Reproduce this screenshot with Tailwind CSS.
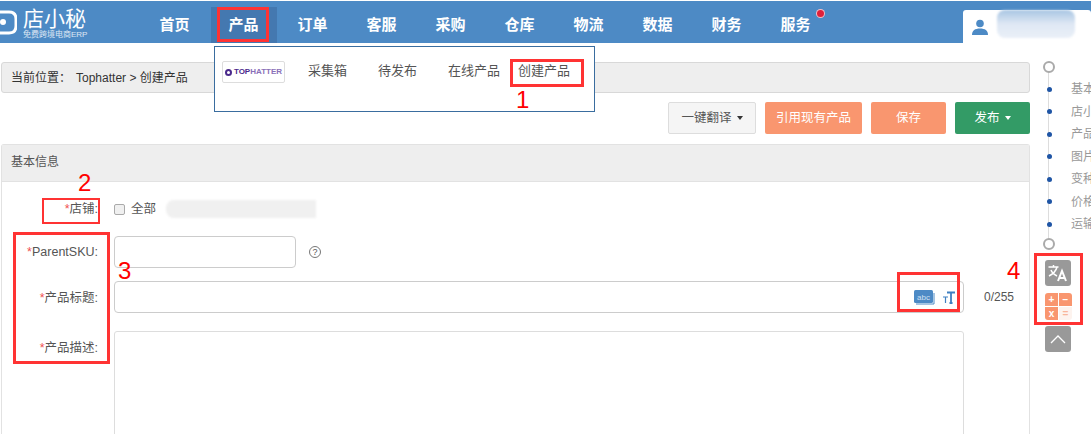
<!DOCTYPE html>
<html lang="zh-CN">
<head>
  <meta charset="UTF-8">
  <title>创建产品</title>
  <script src="https://cdn.jsdelivr.net/npm/@tailwindcss/browser@4"></script>
</head>
<body class="relative w-[1091px] h-[434px] overflow-hidden bg-white text-[#555] text-[12px] font-['Liberation_Sans','Noto_Sans_CJK_SC',sans-serif]">
  <!-- Header -->
  <header class="mt-px h-[42px] bg-[#4d8ac5] flex text-white">
    <div class="w-[140px] h-full flex items-center shrink-0">
      <svg class="w-[17px] h-[28px] shrink-0" viewBox="0 0 17 28" fill="none"><path d="M0 4h9q7 0 7 7v7q0 7-7 7H0" stroke="#fff" stroke-width="3"/><circle cx="3" cy="14" r="3" fill="#fff"/></svg>
      <div class="ml-[6px] mt-[1px]">
        <div class="text-[21px] leading-[23px]">店小秘</div>
        <div class="text-[8px] leading-[9px] text-white/80 whitespace-nowrap">免费跨境电商ERP</div>
      </div>
    </div>
    <nav class="flex h-full text-[15px] font-bold">
      <a class="w-[69px] pt-[6px] flex items-center justify-center">首页</a>
      <a class="w-[66px] mx-[1.5px] mt-[6px] flex items-center justify-center bg-[#4478b0]">产品</a>
      <a class="w-[69px] pt-[6px] flex items-center justify-center">订单</a>
      <a class="w-[69px] pt-[6px] flex items-center justify-center">客服</a>
      <a class="w-[69px] pt-[6px] flex items-center justify-center">采购</a>
      <a class="w-[69px] pt-[6px] flex items-center justify-center">仓库</a>
      <a class="w-[69px] pt-[6px] flex items-center justify-center">物流</a>
      <a class="w-[69px] pt-[6px] flex items-center justify-center">数据</a>
      <a class="w-[69px] pt-[6px] flex items-center justify-center">财务</a>
      <a class="relative w-[69px] pt-[6px] flex items-center justify-center">服务
        <span class="absolute left-[55px] top-[8px] w-[9px] h-[9px] rounded-full bg-[#e0203a] border border-white/70"></span>
      </a>
    </nav>
    <div class="ml-auto mt-[9px] w-[128px] h-[33px] bg-white rounded-t-[3px] flex items-start pl-[9px]">
      <svg class="mt-[9px] w-[16px] h-[16px] shrink-0" viewBox="0 0 16 16" fill="#4d8ac5"><circle cx="8" cy="4.5" r="3.8"/><path d="M0 16c0-4.5 3-6.5 8-6.5s8 2 8 6.5z"/></svg>
      <div class="ml-[9px] w-[78px] h-[28px] rounded-[8px] bg-linear-to-b from-[#a9c6e3] via-[#dfe8f4] to-[#eaf0f8] blur-[1px]"></div>
    </div>
  </header>

  <!-- Dropdown -->
  <div class="absolute z-10 left-[214px] top-[46px] w-[381px] h-[66px] bg-white border border-[#3a6d9f] flex items-start pt-[14px] pl-[7px] text-[13px] text-[#555]">
    <div class="w-[63px] h-[22px] border border-[#ddd] rounded-[2px] flex items-center justify-center text-[8px] font-bold text-[#4b2a8c] whitespace-nowrap">
      <span class="inline-block w-[7px] h-[7px] rounded-full border-2 border-[#4b2a8c] mr-[2px]"></span>TOP<span class="text-[#8a70b8]">HATTER</span>
    </div>
    <span class="ml-[23px] -mt-px leading-[22px]">采集箱</span>
    <span class="ml-[31px] -mt-px leading-[22px]">待发布</span>
    <span class="ml-[31px] -mt-px leading-[22px]">在线产品</span>
    <span class="ml-[18px] -mt-px leading-[22px]">创建产品</span>
  </div>

  <main class="w-[1030px] pl-px pt-[19px]">
    <!-- Breadcrumb -->
    <div class="h-[31px] bg-[#eee] border border-[#d8d8d8] rounded-[3px] flex items-center pl-[9px] text-[#333]">
      当前位置：<span class="ml-[5px]">Tophatter &gt; 创建产品</span>
    </div>

    <!-- Toolbar -->
    <div class="mt-[9px] h-[32px] flex justify-end gap-[9px] text-[12.5px]">
      <button class="w-[88px] bg-[#f5f5f5] border border-[#ddd] rounded-[2px] text-[#555] flex items-center justify-center gap-[5px]">一键翻译<span class="w-0 h-0 border-x-[3.5px] border-x-transparent border-t-[4px] border-t-[#333]"></span></button>
      <button class="w-[97px] bg-[#f9966f] rounded-[2px] text-white">引用现有产品</button>
      <button class="w-[75px] bg-[#f9966f] rounded-[2px] text-white">保存</button>
      <button class="w-[75px] bg-[#339b66] rounded-[2px] text-white flex items-center justify-center gap-[5px]">发布<span class="w-0 h-0 border-x-[3.5px] border-x-transparent border-t-[4px] border-t-white"></span></button>
    </div>

    <!-- Basic info panel -->
    <section class="mt-[10px] h-[300px] border-x border-t border-[#e2e2e2] rounded-t-[3px]">
      <div class="h-[37px] bg-[#eee] border-b border-[#e2e2e2] flex items-center pl-[9px] pb-[2px] text-[#555]">基本信息</div>

      <div class="flex items-center h-[20px] mt-[17px]">
        <label class="w-[96px] text-right text-[12.5px]"><span class="text-[#f05050]">*</span>店铺:</label>
        <input type="checkbox" class="ml-[16px] w-[11px] h-[11px] appearance-none bg-[#f0f0f0] border border-[#aaa] rounded-[2px]">
        <span class="ml-[6px] text-[12.5px]">全部</span>
        <div class="ml-[10px] w-[150px] h-[18px] rounded-l-[8px] bg-[#f0f0f0] blur-[1px]"></div>
      </div>

      <div class="flex items-center mt-[17px]">
        <label class="w-[96px] text-right text-[12.5px]"><span class="text-[#f05050]">*</span>ParentSKU:</label>
        <div class="ml-[16px] w-[182px] h-[32px] border border-[#ccc] rounded-[4px]"></div>
        <span class="ml-[13px] w-[12px] h-[12px] rounded-full border border-[#777] text-[9px] leading-[10px] text-center text-[#555]">?</span>
      </div>

      <div class="flex items-center mt-[13px]">
        <label class="w-[96px] pt-[2px] text-right text-[12.5px]"><span class="text-[#f05050]">*</span>产品标题:</label>
        <div class="ml-[16px] w-[850px] h-[32px] border border-[#ccc] rounded-[4px] flex items-center justify-end pr-[8px] gap-[8px]">
          <svg class="w-[21px] h-[15px]" viewBox="0 0 21 15"><path d="M2 14h18V3" fill="none" stroke="#4d8ac5"/><rect width="19" height="13" rx="1.5" fill="#4d8ac5"/><text x="9.5" y="9.5" font-size="8" text-anchor="middle" fill="#cfe0f2" font-family="Liberation Sans">abc</text></svg>
          <svg class="w-[12px] h-[13px]" viewBox="0 0 12 13" fill="none" stroke="#3f80c2"><path d="M4 1.5h8M8 1.5V12M6.5 12h3" stroke-width="1.8"/><path d="M0 6h5M2.5 6v6" stroke-width="1.2"/></svg>
        </div>
        <span class="ml-[20px] text-[12px] text-[#555]">0/255</span>
      </div>

      <div class="flex mt-[18px]">
        <label class="w-[96px] text-right text-[12.5px] pt-[8px]"><span class="text-[#f05050]">*</span>产品描述:</label>
        <div class="ml-[16px] w-[850px] h-[120px] border border-[#ddd] rounded-[3px]"></div>
      </div>
    </section>
  </main>

  <!-- Right rail -->
  <aside class="absolute left-[1042px] top-[61px] w-[49px] text-[#999] text-[12px]">
    <div class="absolute left-[6px] top-[6px] w-px h-[176px] bg-[#ddd]"></div>
    <div class="relative w-[12px] h-[12px] rounded-full border-2 border-[#aaa] bg-white mb-[5px] ml-px"></div>
    <ul class="relative">
      <li class="h-[22.5px] flex items-center"><span class="ml-[5px] w-[5px] h-[5px] shrink-0 rounded-full bg-[#1f55a5]"></span><span class="ml-[19px] whitespace-nowrap">基本信息</span></li>
      <li class="h-[22.5px] flex items-center"><span class="ml-[5px] w-[5px] h-[5px] shrink-0 rounded-full bg-[#1f55a5]"></span><span class="ml-[19px] whitespace-nowrap">店小秘</span></li>
      <li class="h-[22.5px] flex items-center"><span class="ml-[5px] w-[5px] h-[5px] shrink-0 rounded-full bg-[#1f55a5]"></span><span class="ml-[19px] whitespace-nowrap">产品信息</span></li>
      <li class="h-[22.5px] flex items-center"><span class="ml-[5px] w-[5px] h-[5px] shrink-0 rounded-full bg-[#1f55a5]"></span><span class="ml-[19px] whitespace-nowrap">图片信息</span></li>
      <li class="h-[22.5px] flex items-center"><span class="ml-[5px] w-[5px] h-[5px] shrink-0 rounded-full bg-[#1f55a5]"></span><span class="ml-[19px] whitespace-nowrap">变种信息</span></li>
      <li class="h-[22.5px] flex items-center"><span class="ml-[5px] w-[5px] h-[5px] shrink-0 rounded-full bg-[#1f55a5]"></span><span class="ml-[19px] whitespace-nowrap">价格信息</span></li>
      <li class="h-[22.5px] flex items-center"><span class="ml-[5px] w-[5px] h-[5px] shrink-0 rounded-full bg-[#1f55a5]"></span><span class="ml-[19px] whitespace-nowrap">运输信息</span></li>
    </ul>
    <div class="relative w-[12px] h-[12px] rounded-full border-2 border-[#aaa] bg-white mt-[2px] ml-px"></div>
    <div class="mt-[10px] ml-[3px] flex flex-col items-start">
      <div class="w-[26px] h-[26px] bg-[#999] rounded-[3px] flex items-center justify-center text-white font-bold leading-none">
        <svg class="w-[20px] h-[18px]" viewBox="0 0 20 18" fill="none" stroke="#fff" stroke-width="1.5"><path d="M0.5 3h10M5.5 1v2M9 3c-1 4-4 7-8 9M3 6c1 3 4 5 6 6"/><path d="M10 17l4-10 4 10M11.5 14h5" stroke-width="2"/></svg>
      </div>
      <div class="mt-[7px] w-[27px] h-[27px] grid grid-cols-2 gap-px rounded-[3px] overflow-hidden text-[10px] font-bold text-white text-center leading-[13px]">
        <span class="bg-[#f9966f]">+</span><span class="bg-[#f9966f]">−</span><span class="bg-[#f9966f]">x</span><span class="bg-[#fdf3ee] text-[#f9b59a]">=</span>
      </div>
      <div class="mt-[6px] w-[26px] h-[26px] bg-[#999] rounded-[3px] flex items-center justify-center">
        <svg class="w-[16px] h-[10px]" viewBox="0 0 16 10" fill="none" stroke="#fff" stroke-width="1.3"><path d="M1 9l7-7 7 7"/></svg>
      </div>
    </div>
  </aside>

  <!-- Red annotations -->
  <div class="absolute z-20 left-[217px] top-[7px] w-[52px] h-[35px] border-[3px] border-[#f33]"></div>
  <div class="absolute z-20 left-[510px] top-[59px] w-[74px] h-[28px] border-[3px] border-[#f33]"></div>
  <div class="absolute z-20 left-[42px] top-[198px] w-[58px] h-[26px] border-[2px] border-[#f33]"></div>
  <div class="absolute z-20 left-[13px] top-[232px] w-[97px] h-[132px] border-[3px] border-[#f33]"></div>
  <div class="absolute z-20 left-[897px] top-[272px] w-[63px] h-[40px] border-[3px] border-[#f33]"></div>
  <div class="absolute z-20 left-[1034px] top-[253px] w-[49px] h-[72px] border-[3px] border-[#f33]"></div>
  <span class="absolute z-20 left-[516px] top-[86px] text-[24px] leading-[27px] text-[#f00]">1</span>
  <span class="absolute z-20 left-[78px] top-[169px] text-[24px] leading-[27px] text-[#f00]">2</span>
  <span class="absolute z-20 left-[118px] top-[257px] text-[24px] leading-[27px] text-[#f00]">3</span>
  <span class="absolute z-20 left-[1007px] top-[257px] text-[24px] leading-[27px] text-[#f00]">4</span>
</body>
</html>
